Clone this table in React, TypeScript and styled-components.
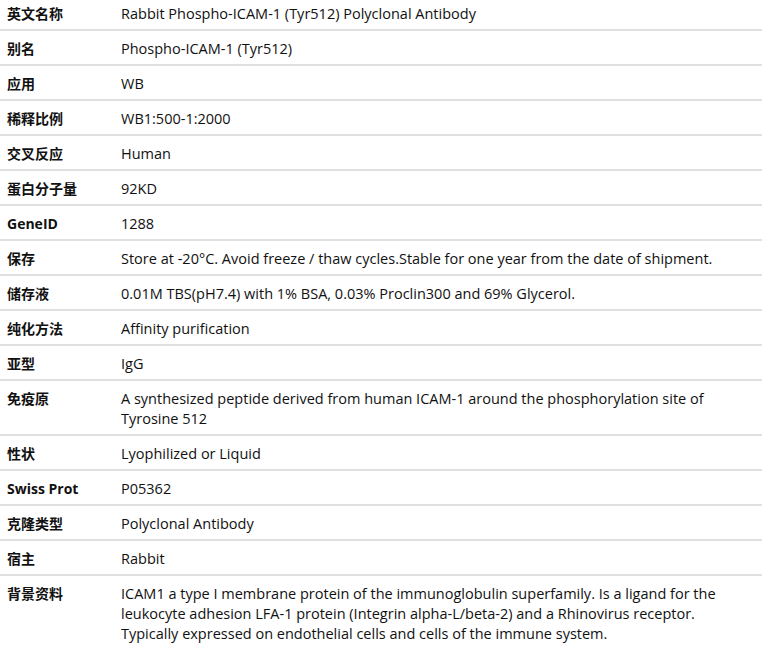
import styled, { createGlobalStyle } from "styled-components";

const GlobalStyle = createGlobalStyle`
  body {
    margin: 0;
    background: #fff;
  }
`;

interface SpecRow {
  label: string;
  value: string;
}

const rows: SpecRow[] = [
  { label: "英文名称", value: "Rabbit Phospho-ICAM-1 (Tyr512) Polyclonal Antibody" },
  { label: "别名", value: "Phospho-ICAM-1 (Tyr512)" },
  { label: "应用", value: "WB" },
  { label: "稀释比例", value: "WB1:500-1:2000" },
  { label: "交叉反应", value: "Human" },
  { label: "蛋白分子量", value: "92KD" },
  { label: "GeneID", value: "1288" },
  {
    label: "保存",
    value:
      "Store at -20°C. Avoid freeze / thaw cycles.Stable for one year from the date of shipment.",
  },
  {
    label: "储存液",
    value: "0.01M TBS(pH7.4) with 1% BSA, 0.03% Proclin300 and 69% Glycerol.",
  },
  { label: "纯化方法", value: "Affinity purification" },
  { label: "亚型", value: "IgG" },
  {
    label: "免疫原",
    value:
      "A synthesized peptide derived from human ICAM-1 around the phosphorylation site of Tyrosine 512",
  },
  { label: "性状", value: "Lyophilized or Liquid" },
  { label: "Swiss Prot", value: "P05362" },
  { label: "克隆类型", value: "Polyclonal Antibody" },
  { label: "宿主", value: "Rabbit" },
  {
    label: "背景资料",
    value:
      "ICAM1 a type I membrane protein of the immunoglobulin superfamily. Is a ligand for the leukocyte adhesion LFA-1 protein (Integrin alpha-L/beta-2) and a Rhinovirus receptor. Typically expressed on endothelial cells and cells of the immune system.",
  },
];

export default function App() {
  return (
    <>
      <GlobalStyle />
      <SpecTable>
        {rows.map((row) => (
          <Row key={row.label}>
            <Label>{row.label}</Label>
            <Value>{row.value}</Value>
          </Row>
        ))}
      </SpecTable>
    </>
  );
}

const SpecTable = styled.div`
  width: 762px;
  margin-top: -4px;
  display: flex;
  flex-direction: column;
  font-family: "Open Sans", "Noto Sans CJK SC", sans-serif;
  color: #111;
`;

const Row = styled.div`
  display: grid;
  grid-template-columns: 121px 1fr;
  align-items: start;
  padding: 8px 0 5px;
  border-bottom: 2px solid #e0e0e0;
`;

const Label = styled.div`
  padding-left: 7px;
  font-size: 14px;
  line-height: 20px;
  font-weight: 700;
  color: #111;
`;

const Value = styled.div`
  font-size: 14.5px;
  line-height: 20px;
  padding-right: 36px;
`;
